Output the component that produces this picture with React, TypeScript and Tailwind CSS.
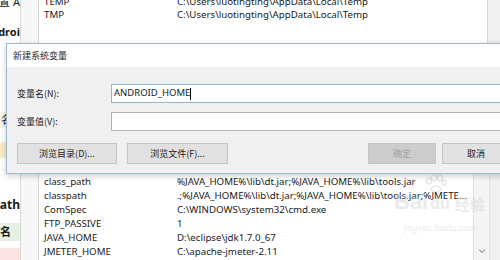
import { FC } from 'react'

const userVars = [
 { name: 'TEMP', value: 'C:\\Users\\luotingting\\AppData\\Local\\Temp' },
 { name: 'TMP', value: 'C:\\Users\\luotingting\\AppData\\Local\\Temp' },
]

const sysVars = [
 { name: 'class_path', value: '%JAVA_HOME%\\lib\\dt.jar;%JAVA_HOME%\\lib\\tools.jar' },
 { name: 'classpath', value: '.;%JAVA_HOME%\\lib\\dt.jar;%JAVA_HOME%\\lib\\tools.jar;%JMETE...' },
 { name: 'ComSpec', value: 'C:\\WINDOWS\\system32\\cmd.exe' },
 { name: 'FTP_PASSIVE', value: '1' },
 { name: 'JAVA_HOME', value: 'D:\\eclipse\\jdk1.7.0_67' },
 { name: 'JMETER_HOME', value: 'C:\\apache-jmeter-2.11' },
]

const font = "font-['Segoe_UI','Noto_Sans','Noto_Sans_CJK_SC',sans-serif]"

const App: FC = (): JSX.Element => {
 return (
  <div className={`relative w-[500px] h-[260px] overflow-hidden bg-[#f0f0f0] text-[#1a1a1a] ${font}`}>
   <div className="flex h-full">
    {/* left strip of the window behind */}
    <div className="w-[21px] shrink-0 bg-white border-r border-[#d9d9d9] overflow-hidden flex flex-col items-end text-[11px] whitespace-nowrap">
     <div className="h-[10px] mt-[-3px] leading-[10px]">设置 A</div>
     <div className="h-[16px] mt-[17px] leading-[16px] font-bold">droi</div>
     <div className="h-[14px] mt-[15px] leading-[14px] text-[#777]">置</div>
     <div className="h-[14px] mt-[6px] leading-[14px] text-[#777]">电</div>
     <div className="h-[16px] mt-[23px] w-full leading-[16px] bg-[#f6f6ec] pl-[1px]">名</div>
     <div className="h-[16px] mt-[14px] w-full leading-[16px] bg-[#fbecc4] text-right">oR</div>
     <div className="h-[16px] mt-[39px] leading-[16px] font-bold text-[12px]">path</div>
     <div className="h-[18px] mt-[10px] w-full leading-[18px] bg-[#e4f0e4] font-bold">名</div>
     <div className="h-[14px] mt-[7px] w-full bg-[#fbe3e3]" />
    </div>
    <div className="w-[18px] shrink-0 bg-[#f7f7f7] border-r border-[#d4d4d4]" />
    <div className="flex-1 flex flex-col">
     {/* user variables list */}
     <div className="flex h-[44px] bg-white">
      <div className="flex-1 flex flex-col pl-[5px] mt-[-5px] text-[9.7px]">
       {userVars.map((v) => (
        <div key={v.name} className="flex h-[13px] leading-[13px]">
         <span className="w-[133px]">{v.name}</span>
         <span>{v.value}</span>
        </div>
       ))}
      </div>
      <div className="w-[13px] border-l border-[#d4d4d4] bg-[#f0f0f0]" />
     </div>
     <div className="flex-1 bg-white" />
     {/* system variables list */}
     <div className="flex h-[86px] bg-white">
      <div className="flex-1 flex flex-col pl-[5px] pt-[1px] text-[9.7px] overflow-hidden">
       {sysVars.map((v) => (
        <div key={v.name} className="flex h-[14px] leading-[14px] whitespace-nowrap">
         <span className="w-[133px] shrink-0">{v.name}</span>
         <span>{v.value}</span>
        </div>
       ))}
      </div>
      <div className="w-[17px] border-x border-[#e2e2e2] bg-[#f4f4f4] flex flex-col justify-end items-center pb-[6px]">
       <svg width="8" height="6" viewBox="0 0 8 6">
        <path d="M1 1.5 L4 4.5 L7 1.5" fill="none" stroke="#707070" strokeWidth="1" />
       </svg>
      </div>
      <div className="w-[10px] bg-[#f0f0f0]" />
     </div>
    </div>
   </div>

   {/* watermark */}
   <div className="absolute left-[394px] top-[174px] flex flex-col items-center text-[#cfcfcf]/45 pointer-events-none">
    <svg width="24" height="18" viewBox="0 0 24 18" className="ml-[-8px]">
     <g fill="none" stroke="#d6d6d6" strokeOpacity="0.6" strokeWidth="1.4">
      <ellipse cx="6" cy="7" rx="2.5" ry="3" />
      <ellipse cx="11" cy="3.5" rx="2.5" ry="3" />
      <ellipse cx="17" cy="4" rx="2.5" ry="3" />
      <ellipse cx="21" cy="9" rx="2" ry="2.5" />
      <path d="M8 16 C9 11 15 10 18 15 C18 18 9 18 8 16 Z" />
     </g>
    </svg>
    <div className="flex items-end gap-[2px] font-['Liberation_Sans',sans-serif] text-[22px] font-bold leading-[22px] mt-[-1px]">
     <span>Bai</span>
     <span className="text-[16px] leading-[18px]">du</span>
     <span className="text-[15px] leading-[18px] ml-[3px] font-['Noto_Sans_CJK_SC',sans-serif]">经验</span>
    </div>
    <div className="text-[9px] mt-[9px] font-['Liberation_Sans',sans-serif]">jingyan.baidu.com</div>
   </div>

   {/* dialog */}
   <div className="absolute left-[6px] top-[43px] w-[510px] h-[131px] border border-[#9dbbd0] bg-[#f0f0f0] shadow-[0_2px_6px_rgba(0,0,0,0.2)] flex flex-col">
    <div className="h-[23px] bg-white flex items-center pl-[6px] text-[9px] text-[#2a2a2a] font-['Noto_Sans_CJK_SC',sans-serif]">
     新建系统变量
    </div>
    <div className="flex flex-col pl-[10px] pt-[17px] text-[9px]">
     <div className="flex items-center h-[19px]">
      <span className="w-[94px] font-['Noto_Sans_CJK_SC',sans-serif]">变量名(N):</span>
      <div className="flex-1 h-full bg-white border border-[#8cb8d2] flex items-center pl-[2px] text-[9.5px] font-['Noto_Sans',sans-serif]">
       ANDROID_HOME<span className="w-px h-[12px] bg-black" />
      </div>
     </div>
     <div className="flex items-center h-[19px] mt-[9px]">
      <span className="w-[94px] font-['Noto_Sans_CJK_SC',sans-serif]">变量值(V):</span>
      <div className="flex-1 h-full bg-white border border-[#b4b4b4]" />
     </div>
     <div className="flex h-[21px] mt-[12px] font-['Noto_Sans_CJK_SC',sans-serif]">
      <div className="w-[100px] bg-[#e1e1e1] border border-[#c4c4c4] flex items-center justify-center">浏览目录(D)...</div>
      <div className="w-[101px] ml-[10px] bg-[#e1e1e1] border border-[#c4c4c4] flex items-center justify-center">浏览文件(F)...</div>
      <div className="w-[68px] ml-[140px] bg-[#cccccc] border border-[#c4c4c4] text-[#a3a3a3] flex items-center justify-center">确定</div>
      <div className="w-[68px] ml-[6px] bg-[#e1e1e1] border border-[#c4c4c4] flex items-center justify-center">取消</div>
     </div>
    </div>
   </div>
  </div>
 )
}

export default App
